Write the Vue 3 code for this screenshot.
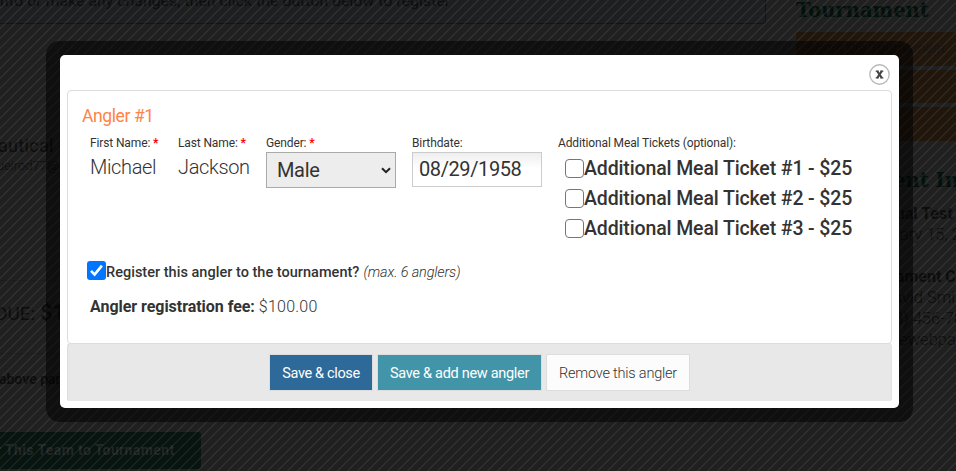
<template>
    <div class="page">
        <div class="main">
            <div class="notice">info or make any changes, then click the button below to register</div>
            <div class="team">
                <div class="team-name">autical Fishing</div>
                <div class="team-mail">ueirod77@</div>
            </div>
            <div class="due">DUE: <b>$100.00</b></div>
            <div class="hint">above paragraph</div>
            <div class="register">r This Team to Tournament</div>
        </div>
        <aside class="sidebar">
            <h2 class="side-title">Tournament</h2>
            <nav class="side-nav">
                <div v-for="(link, i) in links" :key="i" class="side-link">{{ link }}</div>
            </nav>
            <h2 class="side-title info">Tournament Info</h2>
            <div class="side-row name">Annual Test Tour</div>
            <div class="side-row">January 15, 2020</div>
            <div class="side-row name gap">Tournament Contact</div>
            <div class="side-row">David Smith</div>
            <div class="side-row">(123) 456-7890</div>
            <div class="side-row">info@thewebpage.com</div>
        </aside>
    </div>
    <div class="overlay"></div>

    <div class="modal">
        <div class="modal-head">
            <button class="close" @click="close">
                <svg width="21" height="21" viewBox="0 0 21 21">
                    <circle cx="10.5" cy="10.5" r="9.7" fill="#fff" stroke="#bbb" stroke-width="1.4" />
                    <path d="M6.7 7.2h3M11.3 7.2h3M6.7 13.8h3M11.3 13.8h3" stroke="#444" stroke-width="1.3" />
                    <path d="M8.1 7l4.8 7M12.9 7l-4.8 7" stroke="#444" stroke-width="2.2" />
                </svg>
            </button>
        </div>
        <div class="angler">
            <h3 class="title">Angler #1</h3>
            <div class="fields">
                <div class="field first">
                    <label>First Name: <i>*</i></label>
                    <div class="value">{{ angler.firstName }}</div>
                </div>
                <div class="field last">
                    <label>Last Name: <i>*</i></label>
                    <div class="value">{{ angler.lastName }}</div>
                </div>
                <div class="field gender">
                    <label>Gender: <i>*</i></label>
                    <div class="select">
                        <select v-model="angler.gender">
                            <option>Male</option>
                            <option>Female</option>
                        </select>
                        <svg class="arrow" width="10" height="7" viewBox="0 0 10 7">
                            <path d="M1 1.2l4 4 4-4" fill="none" stroke="#222" stroke-width="2" />
                        </svg>
                    </div>
                </div>
                <div class="field birth">
                    <label>Birthdate:</label>
                    <input v-model="angler.birthdate" class="text" type="text">
                </div>
                <div class="field meals">
                    <label>Additional Meal Tickets (optional):</label>
                    <div v-for="meal in meals" :key="meal.id" class="meal" @click="meal.checked = !meal.checked">
                        <span class="box" :class="{ checked: meal.checked }"></span>
                        <span>Additional Meal Ticket #{{ meal.id }} - $25</span>
                    </div>
                </div>
            </div>
            <div class="tournament" @click="registered = !registered">
                <span class="box" :class="{ checked: registered }">
                    <svg v-if="registered" width="19" height="19" viewBox="0 0 19 19">
                        <path d="M4 9.9l3.6 3.7 7.3-8.9" fill="none" stroke="#fff" stroke-width="2.7" />
                    </svg>
                </span>
                <span class="question">Register this angler to the tournament?</span>
                <em>(max. 6 anglers)</em>
            </div>
            <div class="fee"><b>Angler registration fee:</b> <span>$100.00</span></div>
        </div>
        <div class="modal-foot">
            <button class="btn save" @click="close">Save &amp; close</button>
            <button class="btn add">Save &amp; add new angler</button>
            <button class="btn remove">Remove this angler</button>
        </div>
    </div>
</template>

<script setup>
import { reactive, ref } from 'vue';
const emit = defineEmits(['close'])

const links = ['About the Tournament', '', '']

const angler = reactive({
    firstName: 'Michael',
    lastName: 'Jackson',
    gender: 'Male',
    birthdate: '08/29/1958',
})

const meals = reactive([
    { id: 1, checked: false },
    { id: 2, checked: false },
    { id: 3, checked: false },
])

const registered = ref(true)

const close = () => {
    emit('close', angler)
}
</script>

<style>
body {
    background: #202020;
    overflow: hidden;
}
</style>

<style scoped>
* {
    box-sizing: border-box;
}

.page {
    display: flex;
    width: 956px;
    height: 471px;
    overflow: hidden;
    background: #202020;
    color: #0c0d0e;
    font-family: Roboto, sans-serif;
    white-space: nowrap;
}

.main {
    width: 766px;
    margin-right: 30px;
    flex: none;
    overflow: hidden;
}

.notice {
    height: 34px;
    margin-top: -10px;
    margin-left: -5px;
    border: 1px solid #10151a;
    border-top: 0;
    border-radius: 0 0 3px 3px;
    background: #1d1f21;
    font-size: 15.5px;
    line-height: 22px;
    letter-spacing: 0.18px;
}

.team {
    height: 257px;
    padding-top: 111px;
    border-bottom: 1px solid #1c1c1c;
}

.team-name {
    font-size: 18px;
    line-height: 22px;
    margin-left: -2px;
    letter-spacing: 0.3px;
}

.team-mail {
    font-size: 13px;
    line-height: 18px;
    font-weight: 300;
    margin-left: -3px;
}

.due {
    height: 73px;
    padding-top: 20px;
    border-bottom: 1px solid #1c1c1c;
    font-size: 19px;
    line-height: 24px;
    margin-left: -5px;
}

.due b {
    font-size: 22px;
    font-weight: 500;
}

.hint {
    height: 78px;
    padding-top: 15px;
    margin-left: -1px;
    font-size: 14px;
    line-height: 20px;
    font-weight: 700;
}

.register {
    width: 201px;
    height: 37px;
    border-radius: 0 3px 3px 0;
    background: #07140f;
    color: #222625;
    font-size: 14px;
    font-weight: 700;
    line-height: 36px;
    text-indent: -4px;
    letter-spacing: 0.38px;
}

.sidebar {
    width: 260px;
    flex: none;
}

.side-title {
    margin: 0;
    height: 32px;
    color: #03110c;
    font-family: "DejaVu Serif", serif;
    font-size: 19.5px;
    font-weight: 700;
    line-height: 22px;
}

.side-nav {
    display: flex;
    flex-direction: column;
    gap: 4px;
    background: #1e2022;
}

.side-link {
    height: 33.5px;
    padding-left: 10px;
    background: #20160c;
    color: #161412;
    font-size: 14px;
    line-height: 33px;
}

.side-title.info {
    height: 62px;
    padding-top: 29px;
}

.side-row {
    font-size: 16.5px;
    font-weight: 300;
    line-height: 21px;
    text-align: center;
}

.side-row.name {
    padding-left: 4px;
    font-size: 16px;
    font-weight: 700;
}

.side-row.gap {
    margin-top: 21px;
}

.overlay {
    position: absolute;
    inset: 0;
    background: repeating-linear-gradient(135deg, transparent 0 5px, rgba(255, 255, 255, 0.065) 5px 7.071px);
}

.modal {
    position: absolute;
    left: 46px;
    top: 41px;
    width: 867px;
    height: 381px;
    padding: 14px 21px 21px;
    border-radius: 14px;
    background: rgba(0, 0, 0, 0.53);
    color: #333;
    font-family: Roboto, sans-serif;
    isolation: isolate;
}

/* white sheet inside the translucent frame */
.modal::before {
    content: "";
    position: absolute;
    inset: 14px;
    z-index: -1;
    border-radius: 5px;
    background: #fff;
}

.modal-head {
    display: flex;
    justify-content: flex-end;
    height: 35px;
    padding: 9px 2px 0 0;
}

.close {
    width: 21px;
    height: 21px;
    padding: 0;
    border: 0;
    background: none;
}

.close svg {
    display: block;
}

.angler {
    height: 254px;
    padding: 0 14px;
    border: 1px solid #ddd;
    border-radius: 4px;
}

.title {
    margin: 0;
    padding-top: 14px;
    color: #ff8345;
    font-size: 17.5px;
    font-weight: 400;
    line-height: 23px;
    letter-spacing: -0.4px;
}

.fields {
    display: flex;
    height: 129px;
    padding: 6px 0 0 8px;
}

.field {
    flex: none;
}

.field label {
    display: block;
    font-size: 12px;
    line-height: 18px;
    letter-spacing: -0.13px;
    white-space: nowrap;
}

.field label i {
    color: #f00;
    font-style: normal;
    font-weight: 700;
}

.first {
    width: 88px;
}

.last {
    width: 88px;
}

.gender {
    width: 146px;
}

.birth {
    width: 146px;
}

.value {
    font-size: 20px;
    font-weight: 300;
    line-height: 31px;
    letter-spacing: -0.35px;
}

.select {
    position: relative;
    width: 130px;
}

.select select {
    display: block;
    width: 130px;
    height: 36px;
    padding: 0 10px;
    border: 1px solid #aaa;
    border-radius: 0;
    background: #ededed;
    color: #333;
    font-family: Roboto, sans-serif;
    font-size: 20px;
    letter-spacing: -0.35px;
    appearance: none;
}

.arrow {
    position: absolute;
    right: 5px;
    top: 15px;
}

.text {
    display: block;
    width: 130px;
    height: 35px;
    padding: 0 6px 1px;
    border: 1px solid #ccc;
    background: linear-gradient(#eee, #fff 15px);
    color: #333;
    font-family: Roboto, sans-serif;
    font-size: 20px;
    letter-spacing: -0.4px;
    outline: none;
}

.meals {
    display: flex;
    flex-direction: column;
}

.meals label {
    height: 19px;
}

.meal {
    display: flex;
    align-items: center;
    height: 30px;
    padding-left: 7px;
    font-size: 19.5px;
    font-weight: 500;
    letter-spacing: -0.13px;
    white-space: nowrap;
}

.box {
    flex: none;
    width: 19px;
    height: 19px;
    border: 1.5px solid #767676;
    border-radius: 4px;
    background: #fff;
}

.box.checked {
    border: 0;
    border-radius: 3px;
    background: #0075ff;
}

.box svg {
    display: block;
}

.tournament {
    display: flex;
    align-items: center;
    height: 26px;
    padding-left: 5px;
    font-size: 14.5px;
    font-weight: 500;
}

.tournament .question {
    margin-right: 4px;
    padding-top: 4px;
    letter-spacing: 0.02px;
}

.tournament em {
    padding-top: 4px;
    font-weight: 300;
    letter-spacing: -0.15px;
}

.fee {
    padding: 13px 0 0 8px;
    font-size: 16px;
    line-height: 22px;
    font-weight: 300;
}

.fee b {
    font-weight: 700;
    letter-spacing: -0.04px;
}

.fee span {
    letter-spacing: 0.25px;
}

.modal-foot {
    display: flex;
    justify-content: center;
    gap: 4px;
    height: 58px;
    margin-top: -1px;
    padding-top: 10px;
    border: 1px solid #ddd;
    border-color: #ddd #e4e4e4 #e8e8e8 #ddd;
    border-radius: 4px 4px 2px 2px;
    background: #e8e8e8;
}

.btn {
    height: 37px;
    padding: 2px 0 0;
    border: 1px solid #ddd;
    color: #fff;
    font-family: Roboto, sans-serif;
    font-size: 14.5px;
    font-weight: 400;
    letter-spacing: -0.35px;
}

.save {
    width: 104px;
    background: #2d6a99;
}

.add {
    width: 165px;
    background: #4295a9;
    letter-spacing: -0.3px;
}

.remove {
    width: 144px;
    background: #fcfcfc;
    color: #333;
    font-weight: 300;
    letter-spacing: -0.2px;
}
</style>
